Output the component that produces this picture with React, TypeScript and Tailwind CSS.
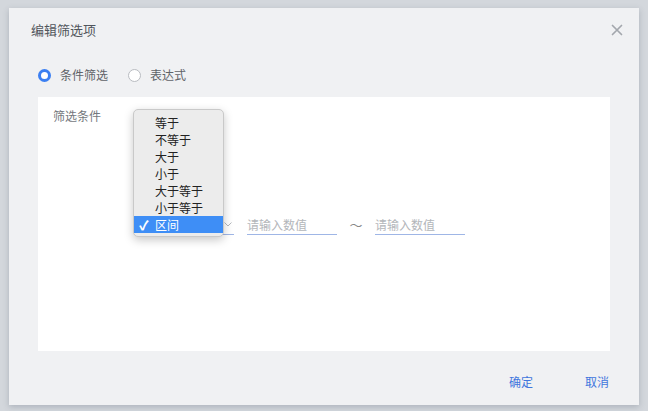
import { useState } from "react";

const ops = ["等于", "不等于", "大于", "小于", "大于等于", "小于等于", "区间"];

const font = { fontFamily: '"Noto Sans CJK SC", "Noto Sans", sans-serif' };

function Radio({ checked, label }: { checked: boolean; label: string }) {
  return (
    <label className="flex items-center gap-[9px] cursor-pointer">
      <span
        className={
          checked
            ? "w-[13px] h-[13px] rounded-full border-[3.5px] border-[#3b7ff2] bg-white"
            : "w-[13px] h-[13px] rounded-full border border-[#b9bcc1] bg-white"
        }
      />
      <span className="text-[12px] text-[#5f6368]">{label}</span>
    </label>
  );
}

export default function App() {
  const [mode, setMode] = useState("cond");
  const [selected] = useState("区间");

  return (
    <div
      className="w-[648px] h-[411px] bg-[#d3d7dc] pt-[8px] pl-[9px] overflow-hidden"
      style={font}
    >
      <div className="w-[630px] h-[397px] bg-[#f0f1f3] shadow-[0_2px_6px_rgba(60,70,90,0.25)] flex flex-col">
        {/* header */}
        <div className="h-[44px] flex items-center justify-between pl-[22px] pr-[16px]">
          <span className="text-[13px] text-[#50555b]">编辑筛选项</span>
          <svg width="12" height="12" viewBox="0 0 12 12" className="text-[#a3a7ad]">
            <path d="M1.5 1.5 L10.5 10.5 M10.5 1.5 L1.5 10.5" stroke="currentColor" strokeWidth="1.7" strokeLinecap="round" />
          </svg>
        </div>

        {/* mode */}
        <div className="mt-[15px] h-[16px] flex items-center gap-[20px] pl-[29px]" onClick={() => setMode(mode)}>
          <Radio checked={mode === "cond"} label="条件筛选" />
          <Radio checked={mode === "expr"} label="表达式" />
        </div>

        {/* panel */}
        <div className="mt-[14px] mx-[29px] h-[254px] bg-white pl-[15px] pt-[10px]">
          <div className="text-[12px] leading-[17px] text-[#74787d]">筛选条件</div>

          <div className="mt-[91px] ml-[81px] flex items-center">
            <div className="relative w-[100px] h-[20px] border-b border-[#9fb6e6] flex items-center justify-end pr-[2px]">
              <svg width="8" height="5" viewBox="0 0 8 5" className="text-[#b5b8bd]">
                <path d="M0.5 0.5 L4 4 L7.5 0.5" fill="none" stroke="currentColor" strokeWidth="1" />
              </svg>

              {/* native-style options menu */}
              <div className="absolute left-[-1px] top-[-106px] w-[91px] h-[128px] bg-[#ececec] rounded-[5px] border border-[#c9c9c9] shadow-[0_3px_10px_rgba(0,0,0,0.22)] pt-[4px]">
                {ops.map((op) => (
                  <div
                    key={op}
                    className={
                      op === selected
                        ? "h-[17px] flex items-center bg-[#3e8ef6] text-white text-[12px]"
                        : "h-[17px] flex items-center text-[#222] text-[12px]"
                    }
                  >
                    <span className="w-[21px] pl-[5px] text-[13px] font-black leading-none">
                      {op === selected ? "✓" : ""}
                    </span>
                    <span>{op}</span>
                  </div>
                ))}
              </div>
            </div>

            <input
              className="ml-[13px] w-[90px] h-[20px] border-b border-[#9fb6e6] outline-none text-[12px] placeholder:text-[#b3b6ba] bg-transparent"
              placeholder="请输入数值"
            />
            <span className="w-[38px] text-center text-[13px] text-[#888]">～</span>
            <input
              className="w-[90px] h-[20px] border-b border-[#9fb6e6] outline-none text-[12px] placeholder:text-[#b3b6ba] bg-transparent"
              placeholder="请输入数值"
            />
          </div>
        </div>

        {/* footer */}
        <div className="flex-1 flex items-center justify-end gap-[52px] pr-[30px] pt-[8px]">
          <button className="text-[12px] text-[#3f76dd]">确定</button>
          <button className="text-[12px] text-[#3f76dd]">取消</button>
        </div>
      </div>
    </div>
  );
}
